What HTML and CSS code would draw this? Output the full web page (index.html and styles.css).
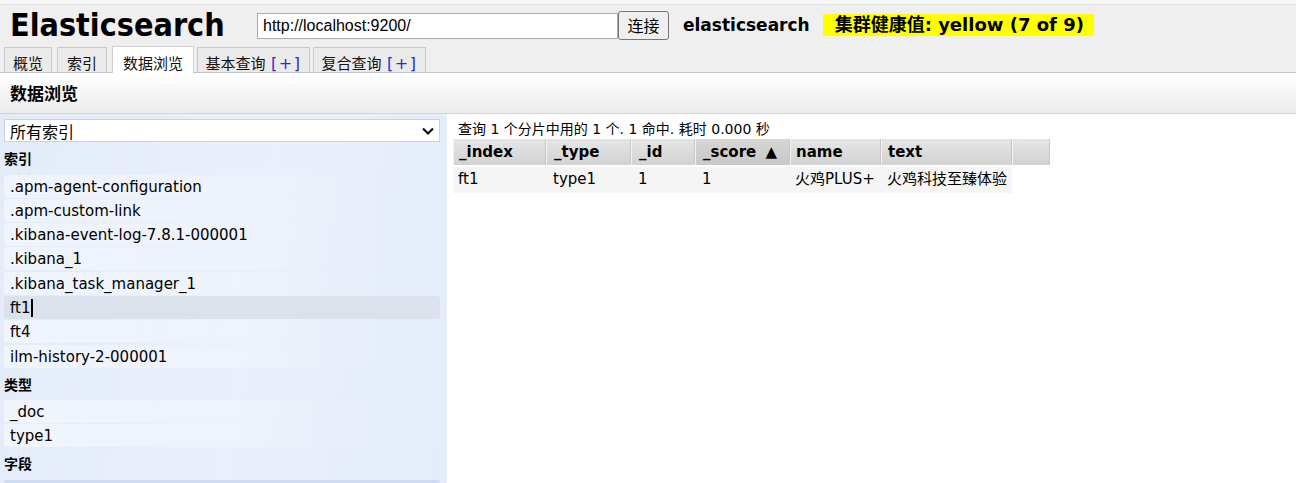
FILE: index.html
```html
<!DOCTYPE html>
<html lang="zh-CN">
<head>
<meta charset="utf-8">
<title>Elasticsearch</title>
<link rel="stylesheet" href="styles.css">
</head>
<body>
<div class="top">
  <div class="header">
    <h1 class="logo">Elasticsearch</h1>
    <input class="url" type="text" value="http://localhost:9200/">
    <button class="connect">连接</button>
    <span class="cluster">elasticsearch</span>
    <span class="health">集群健康值: yellow (7 of 9)</span>
  </div>
  <div class="tabs">
    <div class="tab t1">概览</div>
    <div class="tab t2">索引</div>
    <div class="tab t3 active">数据浏览</div>
    <div class="tab t4">基本查询 <span class="plus">[+]</span></div>
    <div class="tab t5">复合查询 <span class="plus">[+]</span></div>
  </div>
</div>
<div class="subhead">数据浏览</div>
<div class="main">
  <div class="side">
    <div class="selectbox"><span>所有索引</span><svg class="chev" width="14" height="10" viewBox="0 0 14 10"><path d="M2 2.5 L7 7.5 L12 2.5" fill="none" stroke="#111" stroke-width="2.2"/></svg></div>
    <div class="sec">索引</div>
    <div class="item">.apm-agent-configuration</div>
    <div class="item">.apm-custom-link</div>
    <div class="item">.kibana-event-log-7.8.1-000001</div>
    <div class="item">.kibana_1</div>
    <div class="item">.kibana_task_manager_1</div>
    <div class="item sel">ft1<span class="caret"></span></div>
    <div class="item">ft4</div>
    <div class="item">ilm-history-2-000001</div>
    <div class="sec">类型</div>
    <div class="item">_doc</div>
    <div class="item">type1</div>
    <div class="sec">字段</div>
    <div class="item field"></div>
  </div>
  <div class="results">
    <div class="status">查询 1 个分片中用的 1 个. 1 命中. 耗时 0.000 秒</div>
    <table class="grid">
      <thead>
        <tr>
          <th class="c1">_index</th>
          <th class="c2">_type</th>
          <th class="c3">_id</th>
          <th class="c4 sorted">_score <span class="arrow">▲</span></th>
          <th class="c5">name</th>
          <th class="c6">text</th>
          <th class="c7"></th>
        </tr>
      </thead>
      <tbody>
        <tr>
          <td class="d1">ft1</td>
          <td>type1</td>
          <td>1</td>
          <td>1</td>
          <td class="d5">火鸡PLUS+</td>
          <td class="d6">火鸡科技至臻体验</td>
          <td class="empty"></td>
        </tr>
      </tbody>
    </table>
  </div>
</div>
</body>
</html>
```
FILE: styles.css
```css
* { box-sizing: border-box; }
html, body { margin: 0; padding: 0; }
body {
  font-family: "DejaVu Sans", "Noto Sans CJK SC", sans-serif;
  font-size: 15px;
  color: #000;
  background: #fff;
  width: 1296px;
  height: 483px;
  overflow: hidden;
}
.top {
  background: #efefef;
  border-top: 4px solid #f6f6f6;
  border-bottom: 1px solid #c4c4c4;
}
.top::before {
  content: "";
  display: block;
  height: 1px;
  background: #e2e2e2;
}
.header {
  display: flex;
  align-items: center;
  height: 40px;
  padding-left: 10px;
}
.logo {
  margin: 0;
  font-family: "DejaVu Sans", sans-serif;
  font-stretch: condensed;
  font-weight: bold;
  font-size: 32px;
  line-height: 36px;
  width: 247px;
  margin-top: -1px;
  white-space: nowrap;
}
.url {
  width: 361px;
  height: 26px;
  border: 1px solid #a9a9a9;
  background: #fff;
  font-family: "Liberation Sans", sans-serif;
  font-size: 16px;
  padding: 0 5px;
  color: #000;
  margin: 1px 0 0 0;
}
.connect {
  margin: 0;
  width: 51px;
  height: 29px;
  background: #efefef;
  border: 1px solid #767676;
  border-radius: 3px;
  font-family: "Noto Sans CJK SC", sans-serif;
  font-size: 16px;
  padding: 0;
  color: #000;
}
.cluster {
  margin-left: 14px;
  font-weight: bold;
  font-size: 17px;
}
.health {
  margin-left: 13px;
  background: #ffff00;
  font-weight: bold;
  font-size: 18px;
  height: 22px;
  line-height: 22px;
  padding: 0 12px;
  width: 271px;
  white-space: nowrap;
}
.tabs {
  display: flex;
  align-items: flex-end;
  padding-left: 4px;
  height: 27px;
}
.tab {
  font-family: "Noto Sans CJK SC", sans-serif;
  font-size: 15px;
  height: 25px;
  line-height: 20px;
  padding-top: 5px;
  border: 1px solid #c8c8c8;
  border-bottom: none;
  background: #eaeaea;
  text-align: center;
  color: #111;
  white-space: nowrap;
}
.t1 { width: 48px; margin-right: 5px; }
.t2 { width: 50px; margin-right: 5px; }
.t3 { width: 82px; margin-right: 3px; }
.t4 { width: 113px; margin-right: 3px; }
.t5 { width: 113px; }
.tab.active {
  background: #fff;
  height: 27px;
  padding-top: 6px;
  margin-bottom: -1px;
  border-color: #d0d0d0;
}
.plus {
  color: #2a2ad0;
  font-family: "DejaVu Sans", sans-serif;
  font-size: 16px;
  letter-spacing: 1.5px;
  margin-left: 2px;
}
.subhead {
  height: 41px;
  line-height: 40px;
  padding-left: 10px;
  font-family: "Noto Sans CJK SC", sans-serif;
  font-weight: bold;
  font-size: 17px;
  background: linear-gradient(#ffffff, #ececec);
  border-bottom: 1px solid #d2d2d2;
}
.main {
  display: flex;
  align-items: flex-start;
  height: 370px;
}
.side {
  width: 447px;
  height: 100%;
  background: linear-gradient(100deg, #e3ebf9 0%, #eaf0fb 55%, #e4ecfa 100%);
  padding: 5px 7px 0 4px;
  flex: none;
}
.selectbox {
  height: 23px;
  background: #fff;
  border: 1px solid #c9d2de;
  display: flex;
  align-items: center;
  justify-content: space-between;
  padding: 0 4px 0 5px;
  font-family: "Noto Sans CJK SC", sans-serif;
  font-size: 16px;
  margin-bottom: 3px;
}
.chev { display: block; }
.sec {
  font-family: "Noto Sans CJK SC", sans-serif;
  font-weight: bold;
  font-size: 14px;
  height: 26px;
  line-height: 26px;
  margin: 3px 0 3.5px 0;
}
.item {
  height: 23px;
  line-height: 25px;
  margin-bottom: 1.3px;
  padding-left: 6px;
  border-radius: 4px;
  background: linear-gradient(90deg, rgba(255,255,255,0.45), rgba(255,255,255,0.15) 60%, rgba(255,255,255,0) 90%);
  white-space: nowrap;
  overflow: hidden;
}
.item.sel {
  background: #dbe2ec;
}
.item.field {
  background: #cfdcf2;
  height: 6px;
}
.caret {
  display: inline-block;
  width: 2px;
  height: 18px;
  background: #000;
  vertical-align: -4px;
  margin-left: 1px;
}
.results {
  padding: 6px 0 0 6px;
}
.status {
  font-family: "DejaVu Sans", "Noto Sans CJK SC", sans-serif;
  font-size: 14px;
  height: 18px;
  line-height: 18px;
  padding-left: 5px;
  margin-bottom: 1px;
}
.grid {
  border-collapse: separate;
  border-spacing: 0;
}
.grid th {
  height: 25px;
  text-align: left;
  font-weight: bold;
  font-size: 15px;
  line-height: 25px;
  padding: 1px 5px 0 7px;
  background: linear-gradient(#e6e6e6, #dadada 60%, #d2d2d2);
  border-left: 1px solid #f4f4f4;
  border-right: 1px solid #c6c6c6;
  white-space: nowrap;
}
.grid th.c1 { padding-left: 5px; }
.grid th.c5 { padding-left: 5px; }
.grid th.c6 { padding-left: 6px; }
.arrow { margin-left: 4px; }
.grid th.sorted {
  background: linear-gradient(#d6d6d6, #c8c8c8);
}
.c1 { width: 93px; }
.c2 { width: 85px; }
.c3 { width: 64px; }
.c4 { width: 95px; }
.c5 { width: 91px; }
.c6 { width: 131px; }
.c7 { width: 38px; }
.grid td {
  height: 28px;
  line-height: 24px;
  padding: 0 5px 2px 7px;
  background: #f5f5f5;
  border-top: 2px solid #fff;
  white-space: nowrap;
  font-size: 15px;
}
.grid td.d1, .grid td.d5 { padding-left: 5px; }
.grid td.d6 { padding-left: 6px; }
.grid td.empty { background: #fff; }
```
